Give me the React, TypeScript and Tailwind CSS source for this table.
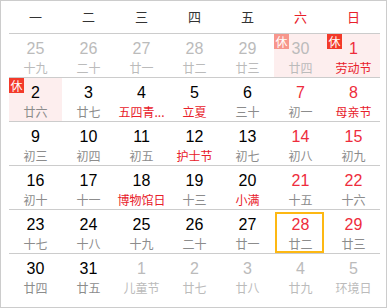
import React from "react";

type Cell = {
  d: string;
  l: string;
  other?: boolean;
  weekend?: boolean;
  fest?: boolean;
  rest?: boolean;
  today?: boolean;
};

const rows: Cell[][] = [
  [
    { d: "25", l: "十九", other: true },
    { d: "26", l: "二十", other: true },
    { d: "27", l: "廿一", other: true },
    { d: "28", l: "廿二", other: true },
    { d: "29", l: "廿三", other: true },
    { d: "30", l: "廿四", other: true, rest: true },
    { d: "1", l: "劳动节", weekend: true, fest: true, rest: true },
  ],
  [
    { d: "2", l: "廿六", rest: true },
    { d: "3", l: "廿七" },
    { d: "4", l: "五四青...", fest: true },
    { d: "5", l: "立夏", fest: true },
    { d: "6", l: "三十" },
    { d: "7", l: "初一", weekend: true },
    { d: "8", l: "母亲节", weekend: true, fest: true },
  ],
  [
    { d: "9", l: "初三" },
    { d: "10", l: "初四" },
    { d: "11", l: "初五" },
    { d: "12", l: "护士节", fest: true },
    { d: "13", l: "初七" },
    { d: "14", l: "初八", weekend: true },
    { d: "15", l: "初九", weekend: true },
  ],
  [
    { d: "16", l: "初十" },
    { d: "17", l: "十一" },
    { d: "18", l: "博物馆日", fest: true },
    { d: "19", l: "十三" },
    { d: "20", l: "小满", fest: true },
    { d: "21", l: "十五", weekend: true },
    { d: "22", l: "十六", weekend: true },
  ],
  [
    { d: "23", l: "十七" },
    { d: "24", l: "十八" },
    { d: "25", l: "十九" },
    { d: "26", l: "二十" },
    { d: "27", l: "廿一" },
    { d: "28", l: "廿二", weekend: true, today: true },
    { d: "29", l: "廿三", weekend: true },
  ],
  [
    { d: "30", l: "廿四" },
    { d: "31", l: "廿五" },
    { d: "1", l: "儿童节", other: true },
    { d: "2", l: "廿七", other: true },
    { d: "3", l: "廿八", other: true },
    { d: "4", l: "廿九", other: true },
    { d: "5", l: "环境日", other: true },
  ],
];

const heads = ["一", "二", "三", "四", "五", "六", "日"];

function DayCell({ c }: { c: Cell }) {
  const numColor = c.other
    ? "text-[#bbbbbb]"
    : c.weekend
    ? "text-[#ee2c3c]"
    : "text-black";
  const lunarColor = c.other
    ? "text-[#bbbbbb]"
    : c.fest
    ? "text-[#e8202a]"
    : "text-[#8c8c8c]";
  return (
    <div
      className={`relative flex flex-col items-center pt-[5px] ${
        c.rest ? "bg-[#fdeeee]" : ""
      }`}
    >
      {c.rest && (
        <div
          className={`absolute left-0 top-0 flex h-[15px] w-[15px] items-center justify-center text-[12px] leading-none text-white ${
            c.other ? "bg-[#f7968c]" : "bg-[#f33a2a]"
          }`}
          style={{ fontFamily: '"Noto Sans CJK SC", sans-serif' }}
        >
          休
        </div>
      )}
      {c.today && (
        <div className="absolute left-px top-[2px] h-[41px] w-[49px] border-2 border-[#fdb813]" />
      )}
      <div
        className={`text-[16px] leading-[20px] ${numColor}`}
        style={{ fontFamily: '"Liberation Sans", Arial, sans-serif' }}
      >
        {c.d}
      </div>
      <div
        className={`whitespace-nowrap text-[12px] leading-[18px] ${lunarColor}`}
        style={{ fontFamily: '"Noto Sans CJK SC", sans-serif' }}
      >
        {c.l}
      </div>
    </div>
  );
}

export default function App() {
  return (
    <div className="h-[308px] w-[387px] border border-[#cccccc] bg-white pl-[8px]">
      <div className="w-[371px]">
        <div
          className="grid h-[33px] grid-cols-7 items-center border-b border-[#cccccc] text-[13px] text-[#333333]"
          style={{ fontFamily: '"Noto Sans CJK SC", sans-serif' }}
        >
          {heads.map((h, i) => (
            <div
              key={h}
              className={`text-center ${i >= 5 ? "text-[#e8202a]" : ""}`}
            >
              {h}
            </div>
          ))}
        </div>
        {rows.map((r, ri) => (
          <div
            key={ri}
            className={`grid h-[44px] grid-cols-7 ${
              ri < rows.length - 1 ? "border-b border-[#cccccc]" : ""
            }`}
          >
            {r.map((c, ci) => (
              <DayCell key={ci} c={c} />
            ))}
          </div>
        ))}
      </div>
    </div>
  );
}
